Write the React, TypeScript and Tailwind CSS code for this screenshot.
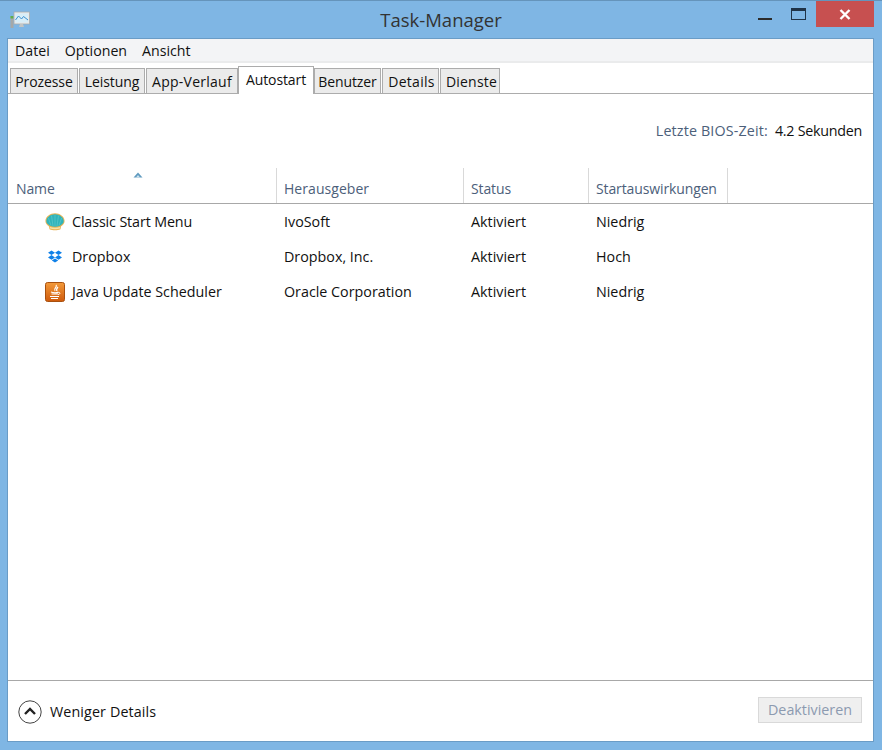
import React from "react";

const font = { fontFamily: '"Open Sans", "Noto Sans", sans-serif' };

function Tab({ label, w, active, tr = "tracking-[-0.1px]", pad = "" }: { label: string; w: string; active?: boolean; tr?: string; pad?: string }) {
  if (active) {
    return (
      <div className={`${w} ${tr} h-[28px] -mb-[1px] bg-white border border-b-0 border-[#acacac] flex items-start justify-center pt-[2px] text-[14px] text-[#111]`}>
        {label}
      </div>
    );
  }
  return (
    <div className={`${w} ${tr} ${pad} h-[25px] bg-[#ebebeb] border border-[#acacac] border-b-0 flex items-center justify-center text-[14px] text-[#111]`}>
      {label}
    </div>
  );
}

function Head({ label, w, sort, pl = "pl-[7px]", tr = "tracking-[-0.12px]" }: { label: string; w: string; sort?: boolean; pl?: string; tr?: string }) {
  return (
    <div className={`${w} ${pl} ${tr} h-[35px] relative shrink-0 border-r border-[#d9d9d9] flex items-end pb-[4px] text-[14px] text-[#4c607a]`}>
      {sort && (
        <svg className="absolute left-[125px] top-[4px]" width="10" height="6" viewBox="0 0 10 6">
          <path d="M0.5 5.5 L5 0.5 L9.5 5.5 Z" fill="#5f9abf" />
          <path d="M3 5.5 L5 3 L7 5.5 Z" fill="#cfe3ef" />
        </svg>
      )}
      {label}
    </div>
  );
}

function Shell() {
  return (
    <svg width="20" height="18" viewBox="0 0 20 18">
      <path d="M10 0.3 C14.8 0.3 19.4 3.5 19.6 8 C19.7 10.5 17.5 12.6 16 13.5 L15.5 16.3 C12.5 17.6 7.5 17.6 4.5 16.3 L4 13.5 C2.5 12.6 0.3 10.5 0.4 8 C0.6 3.5 5.2 0.3 10 0.3 Z" fill="#e9b354" />
      <path d="M10 1.2 C14.2 1.2 18.5 4.1 18.7 8 C18.8 10 16.8 11.6 15 12.8 C12 14 8 14 5 12.8 C3.2 11.6 1.2 10 1.3 8 C1.5 4.1 5.8 1.2 10 1.2 Z" fill="#2fb4ba" />
      <path d="M10 2 L10 13 M6.5 2.6 L8 13 M13.5 2.6 L12 13 M3.4 5 L6 12.5 M16.6 5 L14 12.5" stroke="#7ad6d8" strokeWidth="0.7" strokeOpacity="0.6" fill="none" />
      <path d="M5 14 C8 15 12 15 15 14 L15 15.6 C12 16.6 8 16.6 5 15.6 Z" fill="#f7e2a6" />
    </svg>
  );
}

function DropboxIcon() {
  return (
    <svg width="14" height="13" viewBox="0 0 14 13">
      <path d="M3.5 0.5 L7 2.8 L3.5 5.1 L0 2.8 Z M10.5 0.5 L14 2.8 L10.5 5.1 L7 2.8 Z M3.5 5.1 L7 7.4 L3.5 9.7 L0 7.4 Z M10.5 5.1 L14 7.4 L10.5 9.7 L7 7.4 Z M3.8 10.4 L7 8.4 L10.2 10.4 L7 12.6 Z" fill="#1081e8" />
    </svg>
  );
}

function JavaIcon() {
  return (
    <svg width="20" height="20" viewBox="0 0 20 20">
      <defs>
        <linearGradient id="jg" x1="0" y1="0" x2="0" y2="1">
          <stop offset="0" stopColor="#f39a3a" />
          <stop offset="1" stopColor="#cf5a0c" />
        </linearGradient>
      </defs>
      <rect x="0.5" y="0.5" width="19" height="19" rx="2" fill="url(#jg)" stroke="#a8500f" />
      <path d="M11 3 C13 5 8 6.5 10 9 M13 5 C11.5 6.5 11 7.5 12 9" stroke="#fff" strokeWidth="1.2" fill="none" />
      <path d="M6 10 C8 11 12 11 13.5 10 M6.5 12 H13 M5 14.5 H14 M6 16.5 H13" stroke="#fff" strokeWidth="1.1" fill="none" />
      <path d="M13.5 10.5 C15.5 10 15.5 12.5 13 12.5" stroke="#fff" strokeWidth="1" fill="none" />
    </svg>
  );
}

function Row({ icon, name, pub, impact, tr = "" }: { icon: React.ReactNode; name: string; pub: string; impact: string; tr?: string }) {
  return (
    <div className="h-[35px] flex items-center text-[14.3px] text-[#111]">
      <div className="w-[269px] shrink-0 flex items-center">
        <div className="ml-[37px] flex justify-center shrink-0 w-[20px]">{icon}</div>
        <span className={`ml-[7px] ${tr}`}>{name}</span>
      </div>
      <div className="w-[187px] shrink-0 pl-[7px]">{pub}</div>
      <div className="w-[125px] shrink-0 pl-[7px]">Aktiviert</div>
      <div className="pl-[7px]">{impact}</div>
    </div>
  );
}

export default function App() {
  return (
    <div style={font} className="w-[882px] h-[750px] bg-[#7fb6e4] border-t border-[#6594bb] flex flex-col overflow-hidden">
      <div className="h-[37px] shrink-0 flex items-start relative">
        <div className="ml-[10px] mt-[10px] shrink-0">
          <svg width="21" height="19" viewBox="0 0 21 19">
            <rect x="0.5" y="5" width="3" height="12" rx="0.5" fill="#a5a8a8" />
            <rect x="0.5" y="5" width="3" height="2.5" fill="#5fb04a" />
            <rect x="4" y="1" width="15.5" height="12" fill="#e6e9ea" stroke="#a9adad" strokeWidth="0.8" />
            <rect x="5.5" y="2.5" width="12.5" height="9" fill="#d7eef8" />
            <path d="M5.5 9 L8.5 5 L11.5 8 L13.5 5.5 L18 9" stroke="#3a8fd0" fill="none" />
            <path d="M10 13 H13 L14 16 H9 Z" fill="#c2c5c5" />
          </svg>
        </div>
        <div className="absolute left-0 right-0 top-[7px] text-center text-[18.5px] text-[#333] leading-[24px]">Task-Manager</div>
        <div className="ml-auto flex items-start mr-[8px]">
          <div className="w-[14px] h-[2px] bg-[#2b2b2b] mt-[17px] mr-[19px]" />
          <div className="w-[15px] h-[12px] mt-[7px] border border-[#1f3347] border-t-[3px] mr-[10px]" />
          <div className="w-[58px] h-[26px] bg-[#c75050] flex items-center justify-center">
            <svg width="12" height="11" viewBox="0 0 12 11">
              <path d="M1.5 1 L10.5 10 M10.5 1 L1.5 10" stroke="#fff" strokeWidth="2.4" />
            </svg>
          </div>
        </div>
      </div>

      <div className="ml-[7px] mr-[8px] mb-[8px] grow border border-[#6a9cc6] bg-white flex flex-col min-h-0">
        <div className="h-[24px] shrink-0 bg-[#f3f4f6] border-b-2 border-[#eaebec] flex items-center pl-[7px] pt-[2px] gap-[15px] text-[14.2px] text-[#111]">
          <span>Datei</span>
          <span>Optionen</span>
          <span>Ansicht</span>
        </div>
        <div className="h-[31px] shrink-0 border-b border-[#acacac] flex items-end pl-[2px] gap-[1px]">
          <Tab label="Prozesse" w="w-[68px]" />
          <Tab label="Leistung" w="w-[66px]" />
          <div className="-mr-[1px]"><Tab label="App-Verlauf" w="w-[92px]" tr="tracking-[0.25px]" /></div>
          <Tab label="Autostart" w="w-[76px]" active />
          <div className="-ml-[1px] flex gap-[1px]">
            <Tab label="Benutzer" w="w-[67px]" />
            <Tab label="Details" w="w-[57px]" tr="tracking-[0.3px]" pad="pl-[2px]" />
            <Tab label="Dienste" w="w-[60px]" tr="tracking-[0.2px]" pad="pl-[3px]" />
          </div>
        </div>
        <div className="shrink-0 flex justify-end items-center h-[74px] pr-[11px] text-[14.3px]">
          <span className="text-[#4c607a] mr-[7px] tracking-[0.15px]">Letzte BIOS-Zeit:</span>
          <span className="text-[#111] tracking-[-0.27px]">4.2 Sekunden</span>
        </div>
        <div className="shrink-0 flex border-b border-[#a8a8a8]">
          <Head label="Name" w="w-[269px]" pl="pl-[8px]" sort />
          <Head label="Herausgeber" w="w-[187px]" tr="tracking-[0.05px]" />
          <Head label="Status" w="w-[125px]" />
          <Head label="Startauswirkungen" w="w-[139px]" />
        </div>
        <div className="grow min-h-0">
          <Row icon={<Shell />} name="Classic Start Menu" pub="IvoSoft" impact="Niedrig" tr="tracking-[-0.12px]" />
          <Row icon={<DropboxIcon />} name="Dropbox" pub="Dropbox, Inc." impact="Hoch" />
          <Row icon={<JavaIcon />} name="Java Update Scheduler" pub="Oracle Corporation" impact="Niedrig" />
        </div>
        <div className="h-[61px] shrink-0 border-t border-[#a8a8a8] flex items-center pl-[10px] pr-[11px] pt-[1px]">
          <svg width="24" height="24" viewBox="0 0 24 24">
            <circle cx="12" cy="12" r="11.2" fill="none" stroke="#444" strokeWidth="1" />
            <path d="M7 14 L12 9 L17 14" fill="none" stroke="#222" strokeWidth="2.4" />
          </svg>
          <span className="ml-[8px] text-[14.3px] tracking-[0.12px] text-[#111]">Weniger Details</span>
          <div className="ml-auto w-[104px] h-[26px] -mt-[3px] bg-[#efefef] border border-[#d9d9d9] flex items-center justify-center text-[14.3px] text-[#8c9ab0]">
            Deaktivieren
          </div>
        </div>
      </div>
    </div>
  );
}
